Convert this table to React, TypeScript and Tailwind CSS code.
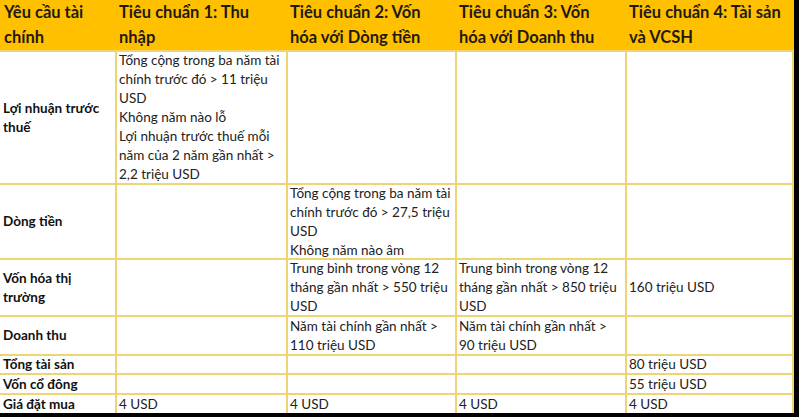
import React from "react";

const B = "border-[#EFD571]";

function Lines({ lines }: { lines: string[] }) {
  return (
    <>
      {lines.map((l, i) => (
        <div key={i} className="whitespace-nowrap">
          {l}
        </div>
      ))}
    </>
  );
}

function Head({ lines }: { lines: string[] }) {
  return (
    <div className="bg-[#FFC000] pl-[4px] flex flex-col justify-center text-[16.5px] leading-[25px] font-bold text-[#1f1a10]">
      <Lines lines={lines} />
    </div>
  );
}

function Label({ lines }: { lines: string[] }) {
  return (
    <div className={`border-t-2 ${B} pl-[3px] flex flex-col justify-center text-[13.5px] leading-[19px] font-bold text-[#111]`}>
      <Lines lines={lines} />
    </div>
  );
}

function Cell({ lines = [] }: { lines?: string[] }) {
  return (
    <div className={`border-t-2 border-l-2 ${B} pl-[2px] flex flex-col justify-center text-[13.5px] leading-[19px] text-[#222]`}>
      <Lines lines={lines} />
    </div>
  );
}

function LastCell({ lines = [] }: { lines?: string[] }) {
  return (
    <div className={`border-t-2 border-l-2 border-r-2 ${B} pl-[2px] flex flex-col justify-center text-[13.5px] leading-[19px] text-[#222]`}>
      <Lines lines={lines} />
    </div>
  );
}

export default function App() {
  return (
    <div className="w-[799px] h-[417px] bg-black overflow-hidden" style={{ fontFamily: "Lato, 'Noto Sans', sans-serif" }}>
      <div className="w-[794px] h-[413px] bg-white grid grid-cols-[115px_171px_169px_170px_169px] grid-rows-[50px_133px_75px_57px_39px_19px_20px_20px]">
        <Head lines={["Yêu cầu tài", "chính"]} />
        <Head lines={["Tiêu chuẩn 1: Thu", "nhập"]} />
        <Head lines={["Tiêu chuẩn 2: Vốn", "hóa với Dòng tiền"]} />
        <Head lines={["Tiêu chuẩn 3: Vốn", "hóa với Doanh thu"]} />
        <Head lines={["Tiêu chuẩn 4: Tài sản", "và VCSH"]} />

        <Label lines={["Lợi nhuận trước", "thuế"]} />
        <Cell
          lines={[
            "Tổng cộng trong ba năm tài",
            "chính trước đó > 11 triệu",
            "USD",
            "Không năm nào lỗ",
            "Lợi nhuận trước thuế mỗi",
            "năm của 2 năm gần nhất >",
            "2,2 triệu USD",
          ]}
        />
        <Cell />
        <Cell />
        <LastCell />

        <Label lines={["Dòng tiền"]} />
        <Cell />
        <Cell
          lines={[
            "Tổng cộng trong ba năm tài",
            "chính trước đó > 27,5 triệu",
            "USD",
            "Không năm nào âm",
          ]}
        />
        <Cell />
        <LastCell />

        <Label lines={["Vốn hóa thị", "trường"]} />
        <Cell />
        <Cell lines={["Trung bình trong vòng 12", "tháng gần nhất > 550 triệu", "USD"]} />
        <Cell lines={["Trung bình trong vòng 12", "tháng gần nhất > 850 triệu", "USD"]} />
        <LastCell lines={["160 triệu USD"]} />

        <Label lines={["Doanh thu"]} />
        <Cell />
        <Cell lines={["Năm tài chính gần nhất >", "110 triệu USD"]} />
        <Cell lines={["Năm tài chính gần nhất >", "90 triệu USD"]} />
        <LastCell />

        <Label lines={["Tổng tài sản"]} />
        <Cell />
        <Cell />
        <Cell />
        <LastCell lines={["80 triệu USD"]} />

        <Label lines={["Vốn cổ đông"]} />
        <Cell />
        <Cell />
        <Cell />
        <LastCell lines={["55 triệu USD"]} />

        <Label lines={["Giá đặt mua"]} />
        <Cell lines={["4 USD"]} />
        <Cell lines={["4 USD"]} />
        <Cell lines={["4 USD"]} />
        <LastCell lines={["4 USD"]} />
      </div>
    </div>
  );
}
